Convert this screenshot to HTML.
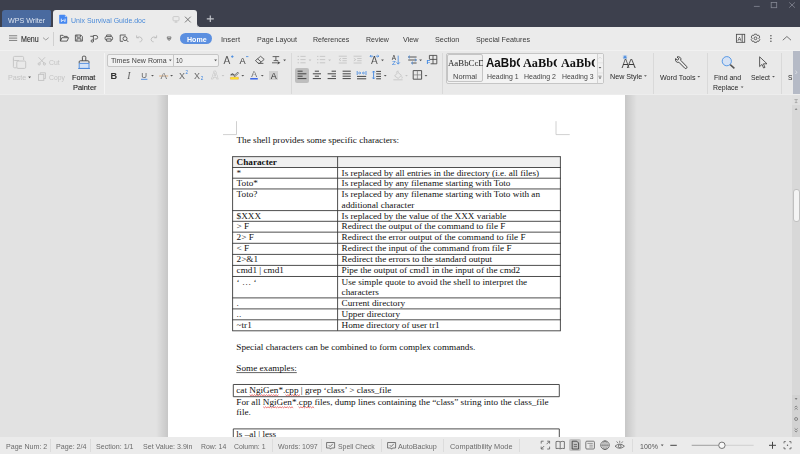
<!DOCTYPE html>
<html>
<head>
<meta charset="utf-8">
<title>Unix Survival Guide.doc - WPS Writer</title>
<style>
html,body{margin:0;padding:0;}
body{width:800px;height:454px;overflow:hidden;position:relative;background:#e3e3e3;font-family:"Liberation Sans",sans-serif;font-size:7.2px;color:#444;}
.abs{position:absolute;}
.t{position:absolute;white-space:nowrap;line-height:10px;transform-origin:0 0;font-family:"Liberation Sans",sans-serif;}
svg{position:absolute;overflow:visible;}
#titlebar{left:0;top:0;width:800px;height:27px;background:#3d404d;}
#tab1{left:1.5px;top:10px;width:49.9px;height:17.4px;background:#4a6a9f;border-radius:3px 1.5px 2px 0;}
#tab2{left:53px;top:10px;width:144.2px;height:18px;background:#ebebeb;border-radius:3px 3px 0 0;}
#menurow{left:0;top:27px;width:800px;height:23px;background:#ebebeb;}
#ribbon{left:0;top:50px;width:800px;height:44px;background:#e9e9e9;}
#ribtop{left:0;top:50px;width:800px;height:1px;background:#f1f1f1;}
#ribbot{left:0;top:94px;width:800px;height:1px;background:#ededed;}
.vsep{position:absolute;width:1px;background:#d9d9d9;top:53px;height:40.5px;}
#home{left:180.2px;top:32.8px;width:31.7px;height:11.5px;border-radius:6px;background:#5b8fe0;}
#fontbox{left:107.2px;top:53.6px;width:112.2px;height:13.2px;box-sizing:border-box;border:1px solid #c6c6c6;border-radius:2px;background:#f1f1f1;}
#fontdiv{left:173.2px;top:54px;width:1px;height:12.4px;background:#c6c6c6;}
#gallery{left:446.2px;top:53.2px;width:157.4px;height:30.8px;box-sizing:border-box;border:1px solid #c6c6c6;border-radius:2px;background:#f3f3f3;}
#normalcell{left:446.9px;top:54.2px;width:36.6px;height:28px;box-sizing:border-box;border:1px solid #c4c4c4;border-radius:2px;background:#efefef;}
#gscroll{left:596.5px;top:53.7px;width:6.6px;height:29.8px;background:#f1f1f1;border-left:1px solid #d2d2d2;box-sizing:border-box;}
.clip{position:absolute;will-change:transform;overflow:hidden;white-space:nowrap;height:16px;line-height:14px;color:#111;}
.cs{display:inline-block;transform-origin:0 0;line-height:14px;}
#alsel{left:295px;top:68.3px;width:14px;height:14.4px;border-radius:2px;background:#bebebe;}
#abox{left:269.4px;top:71px;width:8.6px;height:8.6px;background:#d0d0d0;}
#ribpanel{left:792.6px;top:50.8px;width:7.4px;height:42.8px;background:#b5bac6;}
#docarea{left:0;top:94.8px;width:800px;height:342.2px;background:#e2e2e2;overflow:hidden;}
#page{left:167.6px;top:0;width:457.4px;height:342px;background:#fff;}
#shl{left:156px;top:0;width:11.6px;height:342px;background:linear-gradient(to right,rgba(0,0,0,0),rgba(0,0,0,0.12));}
#shr{left:625px;top:0;width:11.6px;height:342px;background:linear-gradient(to left,rgba(0,0,0,0),rgba(0,0,0,0.12));}
#vscroll{left:792.2px;top:0;width:7.8px;height:342px;background:#d8d8d8;}
#vsplit{left:792.2px;top:0;width:7.8px;height:10.5px;background:#e0e0e0;}
#vbot{left:792.2px;top:300px;width:7.8px;height:42px;background:#d2d2d2;}
#thumb{left:793px;top:94.5px;width:7px;height:33px;box-sizing:border-box;border:1px solid #c0c0c0;border-radius:3px;background:#f4f4f4;}
#status{left:0;top:436.6px;width:800px;height:17.4px;background:#ebebeb;}
.ssep{position:absolute;width:1px;background:#dcdcdc;top:439px;height:13px;}
#viewsel{left:569.1px;top:438.8px;width:12.3px;height:12.6px;border-radius:2px;background:#c2c2c2;}
.dt{position:absolute;white-space:nowrap;font-family:"Liberation Serif",serif;font-size:9.2px;color:#111;line-height:10px;}
</style>
</head>
<body>
<div id="titlebar" class="abs"></div>
<div id="tab1" class="abs"></div>
<div id="tab2" class="abs"></div>
<div id="menurow" class="abs"></div>
<div id="ribbon" class="abs"></div>
<div id="ribtop" class="abs"></div>
<div id="ribbot" class="abs"></div>
<div id="home" class="abs"></div>
<div class="vsep" style="left:53.3px;top:31.8px;height:14px;background:#d0d0d0"></div>
<div class="vsep" style="left:104.2px;background:#f4f4f4"></div>
<div class="vsep" style="left:291px"></div>
<div class="vsep" style="left:442px"></div>
<div class="vsep" style="left:653.3px"></div>
<div class="vsep" style="left:706.6px"></div>
<div class="vsep" style="left:781.4px"></div>
<div id="fontbox" class="abs"></div>
<div id="fontdiv" class="abs"></div>
<div id="gallery" class="abs"></div>
<div id="normalcell" class="abs"></div>
<div id="gscroll" class="abs"></div>
<div id="alsel" class="abs"></div>
<div id="abox" class="abs"></div>
<div class="clip" style="left:448px;top:56px;width:35px;"><span class="cs" style="font-family:'Liberation Serif',serif;font-size:9px;color:#222;transform:scaleX(0.98);">AaBbCcDd</span></div>
<div class="clip" style="left:486px;top:56px;width:34px;"><span class="cs" style="font-family:'Liberation Sans',sans-serif;font-weight:bold;font-size:12.6px;transform:scaleX(0.92);">AaBbCc</span></div>
<div class="clip" style="left:523.1px;top:56px;width:34.4px;"><span class="cs" style="font-family:'Liberation Serif',serif;font-weight:bold;font-size:13px;transform:scaleX(0.945);">AaBbCc</span></div>
<div class="clip" style="left:561px;top:56px;width:34.2px;"><span class="cs" style="font-family:'Liberation Serif',serif;font-weight:bold;font-size:13px;transform:scaleX(0.945);">AaBbCc</span></div>
<div id="docarea" class="abs">
  <div id="shl" class="abs"></div>
  <div id="shr" class="abs"></div>
  <div id="page" class="abs"></div>
  <div id="vscroll" class="abs"></div>
  <div id="vsplit" class="abs"></div>
  <div id="vbot" class="abs"></div>
  <div id="thumb" class="abs"></div>
<svg width="800" height="342" style="left:0;top:0" viewBox="0 94.8 800 342"><path d="M236.5 121V134.4H223M556 121V134.4H569.7" fill="none" stroke="#c4c4c4" stroke-width="0.8"/><rect x="232.6" y="156.45" width="327.79999999999995" height="10.850000000000023" fill="#f0f0f0"/><path d="M232.2 156.45H560.8M232.2 167.3H560.8M232.2 178.0H560.8M232.2 188.75H560.8M232.2 210.4H560.8M232.2 221.1H560.8M232.2 231.95H560.8M232.2 243.1H560.8M232.2 254.2H560.8M232.2 265.2H560.8M232.2 276.3H560.8M232.2 297.7H560.8M232.2 308.7H560.8M232.2 319.6H560.8M232.2 330.6H560.8M232.6 156.45V330.6M337.6 156.45V330.6M560.4 156.45V330.6" fill="none" stroke="#3a3a3a" stroke-width="0.9"/><path d="M233.3 384.3H559.3V396.5H233.3ZM233.3 445V428.7H559.3V445" fill="none" stroke="#3a3a3a" stroke-width="0.9"/><path d="M236.3 372.4H296.8" stroke="#222" stroke-width="0.7"/><path d="M249.7 394.5L250.9 395.5L252.1 394.5L253.3 395.5L254.5 394.5L255.7 395.5L256.9 394.5L258.1 395.5L259.3 394.5L260.5 395.5L261.7 394.5L262.9 395.5L264.1 394.5L265.3 395.5L266.5 394.5L267.7 395.5L268.9 394.5L270.1 395.5L271.3 394.5L272.5 395.5L273.7 394.5L274.9 395.5L276.1 394.5L277.3 395.5L278.5 394.5" fill="none" stroke="#e03838" stroke-width="0.7"/><path d="M285.5 394.5L286.7 395.5L287.9 394.5L289.1 395.5L290.3 394.5L291.5 395.5L292.7 394.5L293.9 395.5L295.1 394.5L296.3 395.5L297.5 394.5L298.7 395.5L299.9 394.5" fill="none" stroke="#e03838" stroke-width="0.7"/><path d="M263.2 406.6L264.4 407.6L265.6 406.6L266.8 407.6L268.0 406.6L269.2 407.6L270.4 406.6L271.6 407.6L272.8 406.6L274.0 407.6L275.2 406.6L276.4 407.6L277.6 406.6L278.8 407.6L280.0 406.6L281.2 407.6L282.4 406.6L283.6 407.6L284.8 406.6L286.0 407.6L287.2 406.6L288.4 407.6L289.6 406.6L290.8 407.6L292.0 406.6L293.2 407.6" fill="none" stroke="#e03838" stroke-width="0.7"/><path d="M298.5 406.6L299.7 407.6L300.9 406.6L302.1 407.6L303.3 406.6L304.5 407.6L305.7 406.6L306.9 407.6L308.1 406.6L309.3 407.6L310.5 406.6L311.7 407.6L312.9 406.6L314.1 407.6" fill="none" stroke="#e03838" stroke-width="0.7"/></svg>
<div class="dt" style="left:236.5px;top:40.50px;">The shell provides some specific characters:</div>
<div class="dt" style="left:236.6px;top:61.95px;"><b>Character</b></div>
<div class="dt" style="left:236.6px;top:72.80px;">*</div>
<div class="dt" style="left:341.6px;top:72.80px;">Is replaced by all entries in the directory (i.e. all files)</div>
<div class="dt" style="left:236.6px;top:83.50px;">Toto*</div>
<div class="dt" style="left:341.6px;top:83.50px;">Is replaced by any filename starting with Toto</div>
<div class="dt" style="left:236.6px;top:94.25px;">Toto?</div>
<div class="dt" style="left:341.6px;top:94.25px;">Is replaced by any filename starting with Toto with an</div>
<div class="dt" style="left:341.6px;top:104.75px;">additional character</div>
<div class="dt" style="left:236.6px;top:115.90px;">$XXX</div>
<div class="dt" style="left:341.6px;top:115.90px;">Is replaced by the value of the XXX variable</div>
<div class="dt" style="left:236.6px;top:126.60px;">&gt; F</div>
<div class="dt" style="left:341.6px;top:126.60px;">Redirect the output of the command to file F</div>
<div class="dt" style="left:236.6px;top:137.45px;">2&gt; F</div>
<div class="dt" style="left:341.6px;top:137.45px;">Redirect the error output of the command to file F</div>
<div class="dt" style="left:236.6px;top:148.60px;">&lt; F</div>
<div class="dt" style="left:341.6px;top:148.60px;">Redirect the input of the command from file F</div>
<div class="dt" style="left:236.6px;top:159.70px;">2&gt;&amp;1</div>
<div class="dt" style="left:341.6px;top:159.70px;">Redirect the errors to the standard output</div>
<div class="dt" style="left:236.6px;top:170.70px;">cmd1 | cmd1</div>
<div class="dt" style="left:341.6px;top:170.70px;">Pipe the output of cmd1 in the input of the cmd2</div>
<div class="dt" style="left:236.6px;top:181.80px;">‘ … ‘</div>
<div class="dt" style="left:341.6px;top:181.80px;">Use simple quote to avoid the shell to interpret the</div>
<div class="dt" style="left:341.6px;top:192.30px;">characters</div>
<div class="dt" style="left:236.6px;top:203.20px;">.</div>
<div class="dt" style="left:341.6px;top:203.20px;">Current directory</div>
<div class="dt" style="left:236.6px;top:214.20px;">..</div>
<div class="dt" style="left:341.6px;top:214.20px;">Upper directory</div>
<div class="dt" style="left:236.6px;top:225.10px;">~tr1</div>
<div class="dt" style="left:341.6px;top:225.10px;">Home directory of user tr1</div>
<div class="dt" style="left:236.3px;top:247.10px;">Special characters can be combined to form complex commands.</div>
<div class="dt" style="left:236.3px;top:267.90px;">Some examples:</div>
<div class="dt" style="left:236.3px;top:289.90px;">cat NgiGen*.cpp | grep ‘class’ &gt; class_file</div>
<div class="dt" style="left:236.3px;top:301.90px;">For all NgiGen*.cpp files, dump lines containing the “class” string into the class_file</div>
<div class="dt" style="left:236.3px;top:311.90px;">file.</div>
<div class="dt" style="left:236.3px;top:334.00px;">ls –al | less</div>
</div>
<div id="status" class="abs"></div>
<div id="viewsel" class="abs"></div>
<div class="ssep" style="left:50.3px"></div>
<div class="ssep" style="left:89.6px"></div>
<div class="ssep" style="left:271.6px"></div>
<div class="ssep" style="left:321.4px"></div>
<div class="ssep" style="left:381.2px"></div>
<div class="ssep" style="left:443.2px"></div>
<div class="ssep" style="left:519.2px"></div>
<div class="ssep" style="left:631.8px"></div>
<div id="ribpanel" class="abs"></div>
<div id="uitexts" style="position:absolute;left:0;top:0;width:800px;height:454px;will-change:transform">
<div class="t" style="left:7.60px;top:16.00px;font-size:7.2px;color:#dde4f0;transform:scaleX(0.992);">WPS Writer</div>
<div class="t" style="left:70.80px;top:16.00px;font-size:7.2px;color:#4a8ad8;transform:scaleX(0.971);">Unix Survival Guide.doc</div>
<div class="t" style="left:20.85px;top:34.00px;font-size:8.4px;color:#2a2a2a;transform:scaleX(0.847);-webkit-text-stroke:0.1px #2a2a2a;">Menu</div>
<div class="t" style="left:186.90px;top:35.00px;font-size:8.0px;color:#fff;transform:scaleX(0.882);font-weight:bold;">Home</div>
<div class="t" style="left:221.25px;top:35.00px;font-size:8.0px;color:#3a3a3a;transform:scaleX(0.949);">Insert</div>
<div class="t" style="left:256.80px;top:35.00px;font-size:8.0px;color:#3a3a3a;transform:scaleX(0.888);">Page Layout</div>
<div class="t" style="left:312.90px;top:35.00px;font-size:8.0px;color:#3a3a3a;transform:scaleX(0.885);">References</div>
<div class="t" style="left:365.60px;top:35.00px;font-size:8.0px;color:#3a3a3a;transform:scaleX(0.873);">Review</div>
<div class="t" style="left:403.40px;top:35.00px;font-size:8.0px;color:#3a3a3a;transform:scaleX(0.907);">View</div>
<div class="t" style="left:434.90px;top:35.00px;font-size:8.0px;color:#3a3a3a;transform:scaleX(0.907);">Section</div>
<div class="t" style="left:475.60px;top:35.00px;font-size:8.0px;color:#3a3a3a;transform:scaleX(0.900);">Special Features</div>
<div class="t" style="left:7.90px;top:73.00px;font-size:7.2px;color:#c4c4c4;transform:scaleX(0.995);">Paste</div>
<div class="t" style="left:49.10px;top:58.00px;font-size:7.2px;color:#c4c4c4;transform:scaleX(0.952);">Cut</div>
<div class="t" style="left:49.10px;top:73.00px;font-size:7.2px;color:#c4c4c4;transform:scaleX(0.947);">Copy</div>
<div class="t" style="left:71.90px;top:73.00px;font-size:7.2px;color:#222;transform:scaleX(1.026);-webkit-text-stroke:0.1px #222;">Format</div>
<div class="t" style="left:72.50px;top:83.00px;font-size:7.2px;color:#222;transform:scaleX(1.032);-webkit-text-stroke:0.1px #222;">Painter</div>
<div class="t" style="left:110.60px;top:56.00px;font-size:7.2px;color:#444;transform:scaleX(0.979);">Times New Roma</div>
<div class="t" style="left:176.25px;top:56.00px;font-size:7.2px;color:#444;transform:scaleX(0.844);">10</div>
<div class="t" style="left:453.00px;top:72.00px;font-size:7.2px;color:#444;transform:scaleX(1.036);">Normal</div>
<div class="t" style="left:486.50px;top:72.00px;font-size:7.2px;color:#444;transform:scaleX(0.961);">Heading 1</div>
<div class="t" style="left:524.00px;top:72.00px;font-size:7.2px;color:#444;transform:scaleX(0.973);">Heading 2</div>
<div class="t" style="left:561.50px;top:72.00px;font-size:7.2px;color:#444;transform:scaleX(0.961);">Heading 3</div>
<div class="t" style="left:609.75px;top:72.00px;font-size:7.2px;color:#262626;transform:scaleX(0.994);">New Style</div>
<div class="t" style="left:659.75px;top:73.00px;font-size:7.2px;color:#262626;transform:scaleX(0.995);">Word Tools</div>
<div class="t" style="left:714.00px;top:73.00px;font-size:7.2px;color:#262626;transform:scaleX(0.965);">Find and</div>
<div class="t" style="left:713.10px;top:83.00px;font-size:7.2px;color:#262626;transform:scaleX(0.963);">Replace</div>
<div class="t" style="left:751.00px;top:73.00px;font-size:7.2px;color:#262626;transform:scaleX(0.951);">Select</div>
<div class="t" style="left:787.90px;top:73.00px;font-size:7.2px;color:#262626;transform:scaleX(0.917);">S</div>
<div class="t" style="left:6.00px;top:442.00px;font-size:7.2px;color:#6a6a6a;transform:scaleX(0.983);">Page Num: 2</div>
<div class="t" style="left:56.00px;top:442.00px;font-size:7.2px;color:#6a6a6a;transform:scaleX(0.991);">Page: 2/4</div>
<div class="t" style="left:96.00px;top:442.00px;font-size:7.2px;color:#6a6a6a;transform:scaleX(0.988);">Section: 1/1</div>
<div class="t" style="left:142.75px;top:442.00px;font-size:7.2px;color:#6a6a6a;transform:scaleX(0.983);">Set Value: 3.9in</div>
<div class="t" style="left:201.25px;top:442.00px;font-size:7.2px;color:#6a6a6a;transform:scaleX(0.957);">Row: 14</div>
<div class="t" style="left:233.50px;top:442.00px;font-size:7.2px;color:#6a6a6a;transform:scaleX(0.961);">Column: 1</div>
<div class="t" style="left:277.75px;top:442.00px;font-size:7.2px;color:#6a6a6a;transform:scaleX(0.978);">Words: 1097</div>
<div class="t" style="left:338.10px;top:442.00px;font-size:7.2px;color:#6a6a6a;transform:scaleX(0.955);">Spell Check</div>
<div class="t" style="left:398.10px;top:442.00px;font-size:7.2px;color:#6a6a6a;transform:scaleX(1.001);">AutoBackup</div>
<div class="t" style="left:449.75px;top:442.00px;font-size:7.2px;color:#6a6a6a;transform:scaleX(1.022);">Compatibility Mode</div>
<div class="t" style="left:639.90px;top:442.00px;font-size:7.2px;color:#555;transform:scaleX(0.973);">100%</div>
</div>
<svg width="800" height="454" viewBox="0 0 800 454" style="left:0;top:0" fill="none" stroke-linecap="butt" stroke-linejoin="miter">
<!-- title bar -->
<g stroke="#868995" stroke-width="0.8">
<path d="M753.9 6.4H759.7"/>
<rect x="771.2" y="2.4" width="5.5" height="5.3"/>
<path d="M789.2 2.4L794.9 7.7M794.9 2.4L789.2 7.7"/>
</g>
<path d="M206.8 18.8H213.8M210.3 15.4V22.1" stroke="#c4c6cc" stroke-width="1.2"/>
<!-- tab flare -->
<path d="M197.2 27.2V23.5Q197.3 26.9 200.4 27.2Z" fill="#ebebeb" stroke="none"/>
<!-- doc icon -->
<path d="M59.9 14.8H64.9L67.2 17.1V23.1Q67.2 23.8 66.5 23.8H59.9Q59.2 23.8 59.2 23.1V15.5Q59.2 14.8 59.9 14.8Z" fill="#4688f1" stroke="none"/>
<path d="M64.9 14.8V17.1H67.2Z" fill="#a6c6f8" stroke="none"/>
<path d="M61.3 18.6V21.6L63.2 20L65.1 21.6V18.6" stroke="#fff" stroke-width="0.8"/>
<!-- tab window icon & close -->
<g stroke="#c2c2c2" stroke-width="0.8"><rect x="173" y="16.6" width="6" height="4.2" rx="0.8"/><path d="M174.6 22.2H177.4M176 20.8V22.2"/></g>
<path d="M185 16.7L190.7 22.4M190.7 16.7L185 22.4" stroke="#5a5a5a" stroke-width="0.8"/>
<!-- menu row -->
<path d="M9 35.75H17.2M9 38.1H17.2M9 40.45H17.2" stroke="#555" stroke-width="0.7"/>
<path d="M43 37.6L45.8 40L48.7 37.6" stroke="#8a8a8a" stroke-width="0.8"/>
<g stroke="#4a4a4a" stroke-width="0.85">
<!-- open -->
<path d="M60.4 41.1V35.3H63L63.9 36.4H67.2V37.7M60.4 41.1L61.9 37.7H68.6L67.1 41.1Z"/>
<!-- save -->
<path d="M75.4 35H80.8L82.4 36.6V41.1H75.4ZM76.9 35V37.2H80.4V35M76.9 41.1V38.8H80.9V41.1"/>
<!-- pdf export -->
<path d="M90.3 36.3H93.4M93.4 41.2V35.5H95.9Q97.7 35.5 97.7 37.3Q97.7 39.1 95.9 39.1H94.6"/><circle cx="92.3" cy="41" r="1.2"/>
<!-- print -->
<path d="M106.6 36.6V35H111.1V36.6"/><rect x="105.1" y="36.6" width="7.5" height="3.4" rx="1.2"/><path d="M106.6 38.9H111.1V41.2H106.6Z" fill="#ebebeb"/>
<!-- preview -->
<path d="M125.8 35H120.2V41.3H123"/><circle cx="125" cy="38.6" r="2"/><path d="M126.5 40.1L128.4 42"/>
<!-- dropdown -->
<path d="M167.3 36.9H170.9V38.3H167.3ZM167.6 38.9H170.6L169.1 40.6Z" stroke-width="0.6"/>
<!-- right icons -->
<rect x="736.4" y="34.3" width="8.3" height="8"/><path d="M742.2 34.3V42.3"/>
<circle cx="755.5" cy="38.3" r="1.4"/>
<path d="M754.4 34.2H756.6L757.2 35.5L758.7 35.2L759.8 37.1L758.8 38.3L759.8 39.5L758.7 41.4L757.2 41.1L756.6 42.4H754.4L753.8 41.1L752.3 41.4L751.2 39.5L752.2 38.3L751.2 37.1L752.3 35.2L753.8 35.5Z"/>
</g>
<g fill="#555" stroke="none"><circle cx="770.9" cy="35.8" r="0.8"/><circle cx="770.9" cy="38.5" r="0.8"/><circle cx="770.9" cy="41.2" r="0.8"/></g>
<path d="M782.8 40.2L786.9 36.5L791 40.2" stroke="#666" stroke-width="0.9"/>
<!-- undo redo -->
<g stroke="#b9b9b9" stroke-width="0.85">
<path d="M137 37.6Q139.4 36.2 141.2 37.6Q143 39.4 141.4 41.2Q140.6 41.9 139.6 41.8M136.6 35.4V37.8H139"/>
<path d="M156.2 37.6Q153.8 36.2 152 37.6Q150.2 39.4 151.8 41.2Q152.6 41.9 153.6 41.8M156.6 35.4V37.8H154.2"/>
</g>

<!-- ===== ribbon ===== -->
<!-- paste -->
<g stroke="#c2c2c2" stroke-width="0.9">
<path d="M19 60.5H14.6Q13.4 60.5 13.4 59.3V57.6Q13.4 56.4 14.6 56.4H22.4Q23.6 56.4 23.6 57.6V60"/>
<path d="M13.4 58.5V66.6Q13.4 67.8 14.6 67.8H16.8"/>
<rect x="16.8" y="61" width="8.9" height="7.4" rx="1.2" fill="#e9e9e9"/>
<!-- scissors -->
<path d="M38.6 57.3L44.2 63.2M45 57.3L39.4 63.2"/><circle cx="39.2" cy="63.9" r="1.1"/><circle cx="44.4" cy="63.9" r="1.1"/>
<!-- copy -->
<path d="M40.2 74.4V72.8H45.4V78.6H43.8"/><rect x="38.5" y="74.4" width="5.3" height="6"/>
</g>
<path d="M28.2 76.6H31L29.6 78.2Z" fill="#555" stroke="none"/>
<!-- format painter -->
<path d="M82.4 60.8V57.2Q82.4 56.2 83.4 56.2H84.8Q85.8 56.2 85.8 57.2V60.8" stroke="#444" stroke-width="0.9"/>
<path d="M79.2 63.4V61.8Q79.2 60.8 80.2 60.8H88Q89 60.8 89 61.8V63.4" stroke="#444" stroke-width="0.9"/>
<path d="M79.2 63.4H89V68.4H79.2Z" fill="#d3e3f8" stroke="#4a88dc" stroke-width="0.9"/>
<path d="M78.2 68.5H90" stroke="#4a88dc" stroke-width="0.9"/>
<!-- font box arrows -->
<g fill="#555" stroke="none">
<path d="M168.9 59.6H171.7L170.3 61.2Z"/><path d="M214.2 59.6H217L215.6 61.2Z"/>
<path d="M283.2 59.6H286L284.6 61.2Z"/>
<path d="M151.1 75H153.9L152.5 76.6Z"/><path d="M170.2 75H173L171.6 76.6Z"/>
<path d="M241.4 75H244.2L242.8 76.6Z"/><path d="M260.9 75H263.7L262.3 76.6Z"/>
<path d="M381.1 59.6H383.9L382.5 61.2Z"/><path d="M419.2 59.6H422L420.6 61.2Z"/>
<path d="M383.8 75H386.6L385.2 76.6Z"/><path d="M424.6 75H427.4L426 76.6Z"/>
<path d="M644 75.2H646.8L645.4 76.8Z"/><path d="M697.4 76H700.2L698.8 77.6Z"/>
<path d="M740.7 86.5H743.5L742.1 88.1Z"/><path d="M772.1 76H774.9L773.5 77.6Z"/>
<path d="M660.8 444.6H663.6L662.2 446.2Z"/>
</g>
<g fill="#c4c4c4" stroke="none"><path d="M221.6 75H224.4L223 76.6Z"/><path d="M308.6 59.6H311.4L310 61.2Z"/><path d="M328.2 59.6H331L329.6 61.2Z"/><path d="M405.1 75H407.9L406.5 76.6Z"/></g>
<!-- A+ A- -->
<g stroke="#4a4a4a" stroke-width="0.85">
<!-- eraser -->
<path d="M258.2 63.2L255.4 60.6L260.6 56.3L264.2 59.4L259.8 63.2ZM257.6 58.8L261.2 62M258.2 63.4H263.4"/>
<!-- clear format icon -->
<path d="M272.6 56.6H279.2M275.9 56.6V60.6M273.6 60.6H278.2M272 62.8H277.4"/>
</g>
<path d="M231 56.6H233.6M232.3 55.3V57.9M246 56.6H248.4" stroke="#3f86e0" stroke-width="0.8"/>
<path d="M277.6 61.2L280.4 62.8L277.6 64.4Z" fill="#4a4a4a" stroke="none"/>
<!-- B I U -->
<path d="M141 79.3H147.4" stroke="#4a88dc" stroke-width="0.9"/>
<!-- A strikethrough -->
<path d="M159.2 76H168.2" stroke="#d89a5a" stroke-width="0.8"/>
<!-- X2 x2 -->
<!-- A outline light -->
<!-- highlight -->
<path d="M230.4 79.2H238.4V77.2H230.4Z" fill="#ffee22" stroke="#e89a3a" stroke-width="0.5"/>
<path d="M231 75.8Q231.2 73.6 232.6 73.6Q233.8 73.6 233 75.8M233.8 76L237.6 72.2L238.6 73.2L234.8 76.6ZM230.6 74.4H234.4" stroke="#444" stroke-width="0.7"/>
<!-- A blue underline -->
<path d="M250.2 78.8H257.8" stroke="#2a5ae8" stroke-width="1.4"/>
<!-- A in box -->
<!-- bullets / numbering (light) -->
<g stroke="#c4c4c4" stroke-width="0.9">
<path d="M297.6 56.4H299M300.4 56.4H305.6M297.6 59.6H299M300.4 59.6H305.6M297.6 62.8H299M300.4 62.8H305.6"/>
<path d="M317 56.4H318.4M319.8 56.4H325.2M317 59.6H318.4M319.8 59.6H325.2M317 62.8H318.4M319.8 62.8H325.2"/>
<path d="M338.8 56.2H346.8M342.4 58.5H346.8M342.4 60.7H346.8M338.8 63H346.8M341 58.3L339 59.6L341 60.9"/>
<path d="M353.6 56.2H361.6M357.2 58.5H361.6M357.2 60.7H361.6M353.6 63H361.6M353.8 58.3L355.8 59.6L353.8 60.9"/>
</g>
<!-- A with arrows -->
<path d="M370 56.2H373M375.8 56.2H378.8M371.2 55L370 56.2L371.2 57.4M377.6 55L378.8 56.2L377.6 57.4" stroke="#3f86e0" stroke-width="0.8"/>
<!-- sort AZ -->
<path d="M398.2 55.6V64M396.6 62.4L398.2 64.2L399.8 62.4" stroke="#3f86e0" stroke-width="0.8"/>
<!-- show/hide marks -->
<path d="M408.2 57H416.6M408.2 60H416.6M411.6 63H416.6" stroke="#444" stroke-width="0.9"/>
<path d="M410 55.6L408.4 57L410 58.4M414.8 58.6L416.4 60L414.8 61.4M413 61.6L411.4 63L413 64.4" stroke="#3f86e0" stroke-width="0.8"/>
<!-- table F icon -->
<path d="M429.4 55.4H436.8V63.8H430.6M429.4 55.4V59M433 55.4V63.8M429.4 59.4H436.8" stroke="#444" stroke-width="0.85"/>
<!-- align icons -->
<g stroke="#3c3c3c" stroke-width="0.95">
<path d="M297.6 71.2H302.6M297.6 73.8H306.4M297.6 76.2H302.6M297.6 78.6H306.4"/>
<path d="M314.8 71.2H319M312.8 73.8H321M314.8 76.2H319M312.8 78.6H321"/>
<path d="M331.6 71.2H336M327.6 73.8H336M331.6 76.2H336M327.6 78.6H336"/>
<path d="M342.6 71.2H350.8M342.6 73.8H350.8M342.6 76.2H350.8M342.6 78.6H350.8"/>
<path d="M357 76.4H366.2M357 78.8H366.2"/>
<path d="M376.2 71.4H381M376.2 73.9H381M376.2 76.4H381M376.2 78.8H381"/>
</g>
<path d="M357.2 71V75M366 71V75M358 73H360.6M365.2 73H362.6M359.6 71.9L360.8 73L359.6 74.1M363.6 71.9L362.4 73L363.6 74.1" stroke="#3f86e0" stroke-width="0.8"/>
<path d="M373.6 71V79M372.4 72.4L373.6 71L374.8 72.4M372.4 77.6L373.6 79L374.8 77.6" stroke="#3f86e0" stroke-width="0.9"/>
<!-- shading light -->
<path d="M394.6 76L398 72.4L401.4 75.4L398.2 78.4ZM396.4 72.6Q396.8 70.6 398.6 71.2M401.6 76.4Q402.8 77.8 401.8 78.4M393.4 79.8H402.6" stroke="#c2c2c2" stroke-width="0.8"/>
<!-- borders -->
<path d="M413.2 70.6H421.6V79.2H413.2Z" stroke="#444" stroke-width="0.9"/>
<path d="M417.4 70.6V79.2M413.2 74.9H421.6" stroke="#777" stroke-width="0.7"/>
<!-- gallery scroll -->
<path d="M598.6 58.6L600 57.2L601.4 58.6" stroke="#cfcfcf" stroke-width="0.7"/>
<path d="M598.6 67H601.4L600 68.5Z" fill="#555" stroke="none"/>
<path d="M598.4 76.2H601.6" stroke="#555" stroke-width="0.6"/><path d="M598.6 77.4H601.4L600 78.9Z" fill="#555" stroke="none"/>
<path d="M597 62.8H603M597 73H603" stroke="#d8d8d8" stroke-width="0.6"/>
<!-- new style AA -->
<path d="M622.9 57.2H627.1M625 55.1V59.3M623.5 55.7L626.5 58.7M626.5 55.7L623.5 58.7" stroke="#3f86e0" stroke-width="0.75"/>
<!-- wrench -->
<path d="M678.8 62.2L684.8 68.2Q685.8 69 686.6 68.2Q687.4 67.4 686.6 66.4L680.8 60.4Q681.4 58.2 679.8 57.2Q678.4 56.4 677 57L678.8 58.8L677.6 60.2L675.6 58.6Q675 60.4 676.4 61.8Q677.6 62.8 678.8 62.2Z" stroke="#444" stroke-width="1"/>
<!-- magnifier -->
<circle cx="726.8" cy="61.2" r="4.6" fill="#d6e2f4" stroke="#4a90e2" stroke-width="0.9"/>
<path d="M730.2 64.6L734.4 68.4" stroke="#555" stroke-width="1.5"/>
<!-- cursor -->
<path d="M759.6 56.8V66.6L762 64.4L763.6 68L765 67.4L763.4 63.8H767Z" stroke="#444" stroke-width="0.85"/>
<!-- panel chevron -->
<path d="M795.4 70.8L797 72.4L795.4 74" stroke="#eef0f4" stroke-width="0.7"/>
<!-- ===== status bar ===== -->
<g stroke="#5a5a5a" stroke-width="0.8">
<!-- spell check -->
<path d="M326.6 442.5H334.6V448H331.4L330.6 449.2L329.8 448H326.6Z"/><path d="M328.8 445.2L330.2 446.6L332.8 443.8"/>
<!-- autobackup -->
<path d="M387.6 442.5H395.6V448H392.4L391.6 449.2L390.8 448H387.6Z"/><path d="M389.8 445.2L391.2 446.6L393.8 443.8"/>
<!-- fullscreen -->
<path d="M541.2 443.6V441.2H543.6M547.2 441.2H549.6V443.6M549.6 446.6V449H547.2M543.6 449H541.2V446.6M549.4 441.4L546.6 444.2M541.4 448.8L544.2 446"/>
<!-- book -->
<path d="M556 441.6Q558.2 441 560.2 441.8Q562.2 441 564.4 441.6V448.6Q562.2 448 560.2 448.8Q558.2 448 556 448.6ZM560.2 441.8V448.8"/>
<!-- print layout (selected) -->
<path d="M572.2 441.2H576.8L578.6 443V449H572.2Z" stroke="#333"/><path d="M573.8 444.6H577M573.8 446.6H577" stroke="#333" stroke-width="0.6"/>
<!-- outline -->
<rect x="585.8" y="441.2" width="8.6" height="7.8" rx="1"/><path d="M587.4 443.4H592.8M589.4 445.2H592.8M589.4 447H592.8" stroke-width="0.6"/>
<!-- globe -->
<circle cx="605" cy="445.2" r="4.3"/><path d="M600.7 445.2H609.3M605 440.9V449.5" stroke-width="0.6"/><ellipse cx="605" cy="445.2" rx="2.1" ry="4.3" stroke-width="0.6"/>
<!-- eye protect -->
<path d="M615 446.2Q619.7 442 624.4 446.2Q619.7 450.4 615 446.2Z"/><circle cx="619.7" cy="446.2" r="1.4"/><path d="M616.6 441.4L618 443.2M622.8 441.4L621.4 443.2M619.7 440.8V442.8" stroke-width="0.7"/>
<!-- fit -->
<path d="M784 443.4V441.6H785.8M789.2 441.6H791V443.4M791 447V448.8H789.2M785.8 448.8H784V447"/>
</g>
<circle cx="787.5" cy="445.2" r="0.7" fill="#555" stroke="none"/>
<!-- zoom slider -->
<path d="M670.3 445.3H676.8M769 445.3H776M772.5 441.8V448.8" stroke="#444" stroke-width="1"/>
<path d="M691.7 445.3H718.4" stroke="#8a8a8a" stroke-width="0.8"/><path d="M725.4 445.3H753.6" stroke="#c8c8c8" stroke-width="0.8"/>
<circle cx="721.9" cy="445.3" r="3.2" fill="#f8f8f8" stroke="#555" stroke-width="0.8"/>
<!-- vscroll icons -->
<g stroke="#8a8a8a" stroke-width="0.6">
<path d="M794.4 99.6H797.8M794.8 102.6H797.4M796.1 99.8V102.4"/>
<path d="M794.2 419h0"/>
</g>
<path d="M794.7 109.8H797.5L796.1 108.2Z" fill="#777" stroke="none"/>
<path d="M794.7 398.2H797.5L796.1 399.8Z" fill="#666" stroke="none"/>
<path d="M794.6 407.4L796.1 406L797.6 407.4M794.6 409.6L796.1 408.2L797.6 409.6M794.6 428.4L796.1 429.8L797.6 428.4M794.6 430.6L796.1 432L797.6 430.6" stroke="#666" stroke-width="0.7"/>
<circle cx="796.1" cy="419" r="1.5" stroke="#666" stroke-width="0.7"/>
<!-- letter icons as real text -->
<g font-family="'Liberation Sans',sans-serif" text-anchor="middle" stroke="#e9e9e9" stroke-width="0.12" fill="#3a3a3a">
<text x="226.8" y="63.6" font-size="10.2">A</text>
<text x="242.5" y="63.6" font-size="9.2" stroke="none">A</text>
<text x="113.8" y="78.5" font-size="9.2" font-weight="bold" fill="#333" stroke="none">B</text>
<text x="128.8" y="78.5" font-size="9.6" font-style="italic" font-family="'Liberation Serif',serif">I</text>
<text x="144.1" y="77.7" font-size="8">U</text>
<text x="163.7" y="78.6" font-size="9.8" fill="#555">A</text>
<text x="181.9" y="78.5" font-size="9">X</text>
<text x="196.9" y="78.5" font-size="9">X</text>
<text x="186.8" y="74" font-size="4.6" fill="#3f86e0" stroke="none">2</text>
<text x="202" y="79.8" font-size="4.6" fill="#3f86e0" stroke="none">2</text>
<text x="214.8" y="78.6" font-size="10" font-weight="bold" fill="#ececec" stroke="#c2c2c2" stroke-width="0.5">A</text>
<text x="254" y="77.3" font-size="8.6">A</text>
<text x="273.7" y="78.6" font-size="9" stroke="none" fill="#333">A</text>
<text x="374.4" y="64.4" font-size="10">A</text>
<text x="394" y="59.9" font-size="6.4" stroke="none">A</text>
<text x="394" y="64.6" font-size="6.2" fill="#3f86e0" stroke="none">Z</text>
<text x="625.4" y="67.6" font-size="12">A</text>
<text x="631.4" y="67.6" font-size="13.6">A</text>
<text x="739.4" y="40.7" font-size="5.8" stroke="none">A</text>
<text x="428.4" y="64.4" font-size="6.2" font-weight="bold" fill="#3f86e0" stroke="none">F</text>
</g>
</svg>
</body>
</html>
